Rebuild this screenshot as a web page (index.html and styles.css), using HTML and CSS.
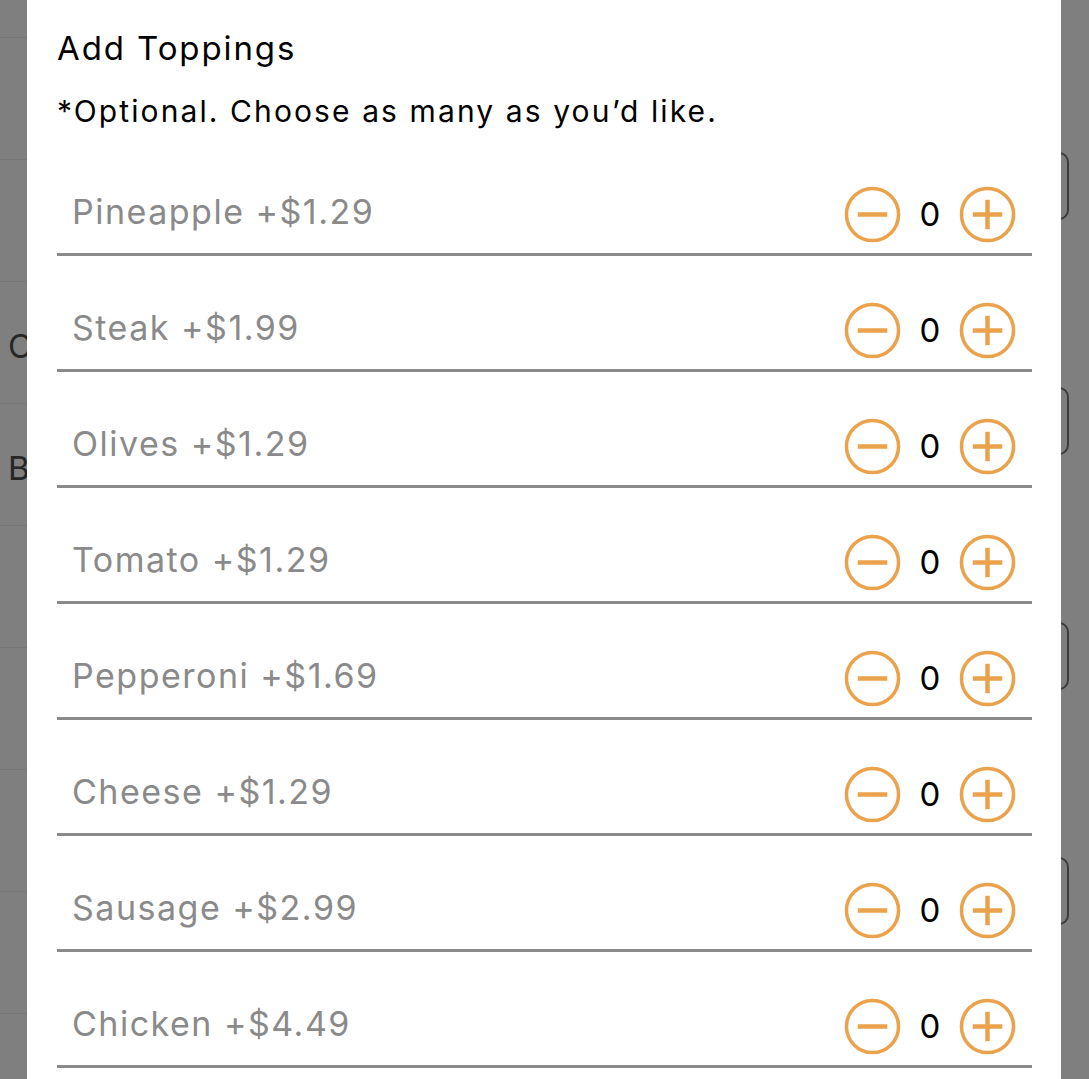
FILE: index.html
```html
<!DOCTYPE html>
<html lang="en">
<head>
<meta charset="utf-8">
<title>Add Toppings</title>
<link rel="stylesheet" href="styles.css">
</head>
<body>
<div class="screen">
  <div class="behind-left">
    <div class="bg-row bg-row-first"></div>
    <div class="bg-row"></div>
    <div class="bg-row"></div>
    <div class="bg-row"><span class="bg-text">C</span></div>
    <div class="bg-row"><span class="bg-text">Br</span></div>
    <div class="bg-row"></div>
    <div class="bg-row"></div>
    <div class="bg-row"></div>
    <div class="bg-row"></div>
  </div>

  <main class="modal">
    <h1 class="title">Add Toppings</h1>
    <p class="subtitle">*Optional. Choose as many as you’d like.</p>

    <ul class="toppings">
      <li class="topping">
        <span class="name">Pineapple +$1.29</span>
        <div class="stepper">
          <svg class="step-btn" viewBox="0 0 58 58"><circle cx="29" cy="29" r="26.5"/><line x1="14" y1="29" x2="44" y2="29"/></svg>
          <span class="count">0</span>
          <svg class="step-btn" viewBox="0 0 58 58"><circle cx="29" cy="29" r="26.5"/><line x1="14" y1="29" x2="44" y2="29"/><line x1="29" y1="14" x2="29" y2="44"/></svg>
        </div>
      </li>
      <li class="topping">
        <span class="name">Steak +$1.99</span>
        <div class="stepper">
          <svg class="step-btn" viewBox="0 0 58 58"><circle cx="29" cy="29" r="26.5"/><line x1="14" y1="29" x2="44" y2="29"/></svg>
          <span class="count">0</span>
          <svg class="step-btn" viewBox="0 0 58 58"><circle cx="29" cy="29" r="26.5"/><line x1="14" y1="29" x2="44" y2="29"/><line x1="29" y1="14" x2="29" y2="44"/></svg>
        </div>
      </li>
      <li class="topping">
        <span class="name">Olives +$1.29</span>
        <div class="stepper">
          <svg class="step-btn" viewBox="0 0 58 58"><circle cx="29" cy="29" r="26.5"/><line x1="14" y1="29" x2="44" y2="29"/></svg>
          <span class="count">0</span>
          <svg class="step-btn" viewBox="0 0 58 58"><circle cx="29" cy="29" r="26.5"/><line x1="14" y1="29" x2="44" y2="29"/><line x1="29" y1="14" x2="29" y2="44"/></svg>
        </div>
      </li>
      <li class="topping">
        <span class="name">Tomato +$1.29</span>
        <div class="stepper">
          <svg class="step-btn" viewBox="0 0 58 58"><circle cx="29" cy="29" r="26.5"/><line x1="14" y1="29" x2="44" y2="29"/></svg>
          <span class="count">0</span>
          <svg class="step-btn" viewBox="0 0 58 58"><circle cx="29" cy="29" r="26.5"/><line x1="14" y1="29" x2="44" y2="29"/><line x1="29" y1="14" x2="29" y2="44"/></svg>
        </div>
      </li>
      <li class="topping">
        <span class="name">Pepperoni +$1.69</span>
        <div class="stepper">
          <svg class="step-btn" viewBox="0 0 58 58"><circle cx="29" cy="29" r="26.5"/><line x1="14" y1="29" x2="44" y2="29"/></svg>
          <span class="count">0</span>
          <svg class="step-btn" viewBox="0 0 58 58"><circle cx="29" cy="29" r="26.5"/><line x1="14" y1="29" x2="44" y2="29"/><line x1="29" y1="14" x2="29" y2="44"/></svg>
        </div>
      </li>
      <li class="topping">
        <span class="name">Cheese +$1.29</span>
        <div class="stepper">
          <svg class="step-btn" viewBox="0 0 58 58"><circle cx="29" cy="29" r="26.5"/><line x1="14" y1="29" x2="44" y2="29"/></svg>
          <span class="count">0</span>
          <svg class="step-btn" viewBox="0 0 58 58"><circle cx="29" cy="29" r="26.5"/><line x1="14" y1="29" x2="44" y2="29"/><line x1="29" y1="14" x2="29" y2="44"/></svg>
        </div>
      </li>
      <li class="topping">
        <span class="name">Sausage +$2.99</span>
        <div class="stepper">
          <svg class="step-btn" viewBox="0 0 58 58"><circle cx="29" cy="29" r="26.5"/><line x1="14" y1="29" x2="44" y2="29"/></svg>
          <span class="count">0</span>
          <svg class="step-btn" viewBox="0 0 58 58"><circle cx="29" cy="29" r="26.5"/><line x1="14" y1="29" x2="44" y2="29"/><line x1="29" y1="14" x2="29" y2="44"/></svg>
        </div>
      </li>
      <li class="topping">
        <span class="name">Chicken +$4.49</span>
        <div class="stepper">
          <svg class="step-btn" viewBox="0 0 58 58"><circle cx="29" cy="29" r="26.5"/><line x1="14" y1="29" x2="44" y2="29"/></svg>
          <span class="count">0</span>
          <svg class="step-btn" viewBox="0 0 58 58"><circle cx="29" cy="29" r="26.5"/><line x1="14" y1="29" x2="44" y2="29"/><line x1="29" y1="14" x2="29" y2="44"/></svg>
        </div>
      </li>
    </ul>
  </main>

  <div class="behind-right">
    <div class="bg-field bg-field-first"></div>
    <div class="bg-field"></div>
    <div class="bg-field"></div>
    <div class="bg-field"></div>
  </div>
</div>
</body>
</html>
```

FILE: styles.css
```css
* { box-sizing: border-box; }

html, body {
  margin: 0;
  padding: 0;
  height: 100%;
  overflow: hidden;
}

body {
  background: #7f7f7f;
  font-family: Inter, "Noto Sans", "Liberation Sans", sans-serif;
}

.screen {
  display: flex;
  height: 1079px;
}

/* dimmed page showing behind the sheet */
.behind-left {
  width: 27px;
  flex: none;
  overflow: hidden;
  display: flex;
  flex-direction: column;
}

.bg-row {
  flex: none;
  height: 122px;
  border-bottom: 1px solid #767676;
  display: flex;
  align-items: center;
  padding-left: 8px;
  white-space: nowrap;
}

.bg-row-first { height: 38px; }

.bg-text {
  font-size: 33px;
  color: #262626;
  margin-top: 6px;
}

.behind-right {
  width: 28px;
  flex: none;
  overflow: hidden;
  display: flex;
  flex-direction: column;
}

.bg-field {
  flex: none;
  margin-left: -20px;
  width: 28px;
  height: 68px;
  margin-top: 167px;
  border: 2.5px solid #3c3c3c;
  border-radius: 10px;
}

.bg-field-first { margin-top: 152px; }

/* the sheet */
.modal {
  flex: 1;
  background: #ffffff;
  padding: 0 29px 0 30px;
}

.title {
  margin: 0;
  padding-top: 27px;
  font-size: 33px;
  line-height: 42px;
  font-weight: 400;
  color: #000;
  letter-spacing: 1.9px;
}

.subtitle {
  margin: 0;
  padding-top: 22px;
  font-size: 30px;
  line-height: 40px;
  color: #000;
  letter-spacing: 2.1px;
}

.toppings {
  list-style: none;
  margin: 0;
  padding: 0;
  padding-top: 9px;
}

.topping {
  display: flex;
  align-items: center;
  justify-content: space-between;
  height: 116px;
  padding: 47px 16px 12px 15px;
  border-bottom: 3px solid #8a8a8a;
}

.name {
  font-size: 34px;
  color: #8a8a8a;
  letter-spacing: 1.5px;
  margin-bottom: 5px;
}

.stepper {
  display: flex;
  align-items: center;
  gap: 18px;
}

.step-btn {
  width: 57px;
  height: 57px;
  fill: none;
  stroke: #eba24c;
  stroke-width: 3.6;
}

.step-btn line {
  stroke-width: 4.6;
}

.count {
  font-size: 33px;
  color: #000;
  width: 22px;
  text-align: center;
}
```
